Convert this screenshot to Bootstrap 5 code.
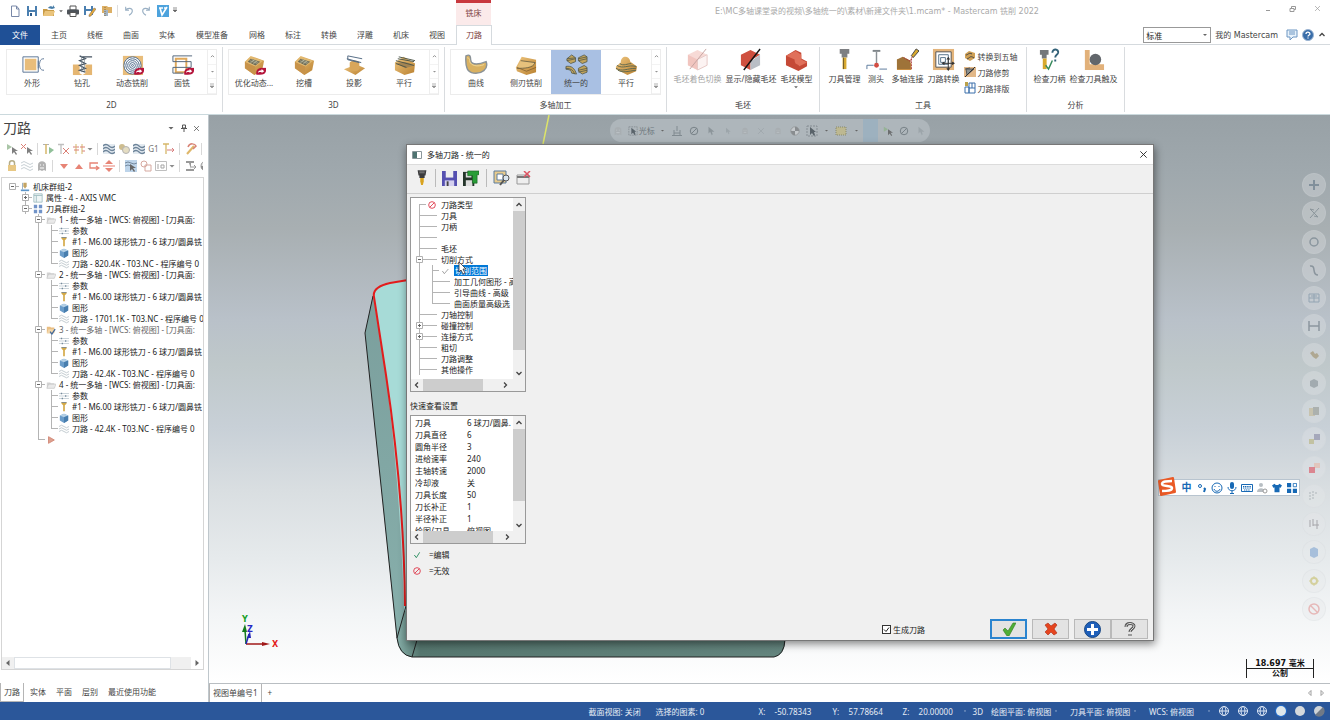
<!DOCTYPE html>
<html lang="zh-CN">
<head>
<meta charset="utf-8">
<meta name="viewport" content="width=device-width, initial-scale=1">
<title>Mastercam 铣削 2022</title>
<link href="https://cdn.jsdelivr.net/npm/bootstrap@5.3.0/dist/css/bootstrap.min.css" rel="stylesheet">
<style>
:root{--line:#d9dcdf;--blue:#2b579a;--ink:#444}
body{font:8px/11px "Noto Sans","Noto Sans CJK SC",sans-serif;color:var(--ink);background:#fff}
svg{display:block;flex:none}
.flat{border:0;background:none;padding:0;color:inherit;font:inherit;display:flex;align-items:center;justify-content:center}
.i8{width:8px;height:8px}.i10{width:10px;height:10px}.i12{width:12px;height:12px}.i24{width:23px;height:23px}
.wide-latin{font-family:"DejaVu Sans","Noto Sans CJK SC",sans-serif}
/* title bar and tabs */
.titlebar{height:25px}
.quick{width:456px;padding:0 0 4px 6px}
.quick .flat{width:17px}
.quick .drop{width:7px}
.quick .rule{width:1px;height:12px;background:#ddd;margin:0 2px}
.context-tab{width:35px;background:#fbeaea;border-top:3px solid #c8383e;color:#7c4040}
.doc-title{color:#a9a9a9;padding:6px 0 0 8px}
.win .flat{width:25px;height:17px;color:#999}
.tabs{height:20px;box-shadow:inset 0 -1px #d5dade}
.tabs a{color:var(--ink);text-decoration:none;width:36px;text-align:center;line-height:20px}
.tabs .file-tab{background:#1f5096;color:#fff;width:40px;margin-right:1px}
.tabs .wide-tab{width:54px}
.tabs .on{background:#fff;border:1px solid #d5dade;border-bottom:0;color:#7c3b3b;line-height:18px;margin-left:1px}
.mode{width:68px;height:16px;border:1px solid #999;border-radius:0;font-size:8px;padding:0 2px;appearance:none;color:#222;background:#fff url("data:image/svg+xml,%3Csvg xmlns='http://www.w3.org/2000/svg' viewBox='0 0 6 4'%3E%3Cpath d='M1 1h4L3 3z' fill='%23666'/%3E%3C/svg%3E") right 2px center/6px 4px no-repeat}
/* ribbon */
.ribbon{height:70px;border-bottom:1px solid #cbd9dd;padding-left:1px}
.rgroup{border-right:1px solid var(--line);margin:2px 0;display:flex;flex-direction:column;justify-content:space-between;align-items:center;padding:1px 0 2px}
.w-gallery{width:222px}.w-stock{width:153px}.w-tools{width:207px}.w-check{width:98px}
.gallery{width:211px;height:46px;border:1px solid #ececec;margin-top:1px;display:flex}
.gallery>.flat{width:50px;flex-direction:column;justify-content:flex-start;padding-top:3px;gap:1px}
.gallery>.picked{background:#a9c0e3}
.spin{width:9px;border-left:1px solid #eee;display:flex;flex-direction:column}
.spin .flat{flex:1;border-bottom:1px solid #eee;opacity:.7}
.big{flex-direction:column;justify-content:flex-start;white-space:nowrap}
.big .i24{margin-bottom:2px}
.stack .flat{height:16px;gap:2px;white-space:nowrap;justify-content:flex-start}
/* side panel */
.side{width:209px;border-right:1px solid #bfc7cc}
.side h1{font-size:14px;line-height:20px;margin:0;font-weight:400}
.side-head{padding:3px 5px 2px 3px}
.side-head .flat{width:13px}
.mini{height:17px;width:203px;overflow:hidden;opacity:.75}
.mini .flat{width:15px;height:15px;flex:none}
.mini .drop{width:8px}
.mini .bar{width:1px;height:12px;background:#ccc;margin:0 3px;flex:none}
.treebox{border:1px solid #d5d5d5;width:203px;margin:3px 0 13px 1px;color:#222}
.optree{padding:3px 0 0 4px}
.trow{display:flex;height:11px;align-items:center;white-space:nowrap}
.cell{width:13px;height:11px;flex:none;position:relative}
.v{background:linear-gradient(#b4b4b4,#b4b4b4) 6px 0/1px 100% no-repeat}
.tee{background:linear-gradient(#b4b4b4,#b4b4b4) 6px 0/1px 100% no-repeat,linear-gradient(#b4b4b4,#b4b4b4) 6px 5px/7px 1px no-repeat}
.end{background:linear-gradient(#b4b4b4,#b4b4b4) 6px 0/1px 6px no-repeat,linear-gradient(#b4b4b4,#b4b4b4) 6px 5px/7px 1px no-repeat}
.top{background:linear-gradient(#b4b4b4,#b4b4b4) 6px 5px/1px 6px no-repeat,linear-gradient(#b4b4b4,#b4b4b4) 6px 5px/7px 1px no-repeat}
.lone{background:linear-gradient(#b4b4b4,#b4b4b4) 6px 5px/7px 1px no-repeat}
.cell svg{width:7px;height:7px;margin:2px 3px}
.ticon{width:12px;height:11px;flex:none;display:flex;align-items:center;justify-content:center}
.dash{background:linear-gradient(#b4b4b4,#b4b4b4) 0 5px/11px 1px no-repeat}
.ttext{padding-left:2px}
.current{color:#666}
.chosen{background:#0078d7;color:#fff;padding:0 1px}
.hbar{height:12px;background:#f0f0f0}
.hbar .flat{width:12px}
.dock a{color:var(--ink);text-decoration:none;line-height:18px;padding:0 5px}
.dock .on{border:1px solid #b5b5b5;border-top:0;padding:0 3px;margin-right:1px}
/* graphics view */
.view{min-width:0;overflow:hidden;background:linear-gradient(#98a1a6,#9fa8ad 10%,#a8afb2 20%,#b9c1c9 36%,#bfc8ca 44%,#c8d0d7 55%,#d9dee1 66%,#e6eaec 78%,#f3f5f6 88%,#fff)}
.pill{width:320px;height:23px;top:4px;left:50%;margin-left:-160px;border-radius:12px;background:#aeb6bb;color:#6d777d}
.pill .flat{width:17px}
.pill .menu{width:13px}
.pill .labelled{width:30px;flex:none;white-space:nowrap;gap:1px}
.rail{top:58px;bottom:62px;right:4px}
.rail .flat{width:24px;height:24px;border-radius:50%;border:1px solid #d5dadd88;background:#e6e9eb88;opacity:.6}
.scale{right:16px;bottom:5px;width:68px;color:#111;font:bold 8px/9px "DejaVu Sans","Noto Sans CJK SC",sans-serif;border:solid #222;border-width:0 1px;text-align:center}
.scale span{display:block}
.scale span+span{border-top:1px solid #222}
.ime{right:30px;top:364px;height:17px;background:#fff;border:1px solid #b8c4cf;padding-left:20px;color:#1769b5}
.ime .flat{width:15px}
.ime .logo{left:-2px;top:-4px}
.ime .lang{font-size:10px;font-weight:700}
/* dialog */
.dlg{left:197px;right:176px;top:29px;bottom:42px;background:#f0f0f0;border:1px solid #777;box-shadow:1px 3px 8px #0007;color:#222}
.dlg-title{height:20px;background:#fff;border-bottom:1px solid #dcdcdc;padding:0 5px 0 4px}
.dlg-tools{height:29px;border-bottom:1px solid #cfcfcf;padding:0 4px 2px}
.dlg-tools .flat{width:22px;height:22px}
.dlg-tools .bar{width:1px;height:18px;background:#bbb;margin:0 2px}
.dlg-tools .wide{margin:0 4px}
.dlg-side{width:120px;padding:3px 0 0 3px}
.lbox{border:1px solid #999;background:#fff;width:116px}
.lbox .ttext{padding-left:3px}
.clip{overflow:hidden;flex:1;min-width:0}
.params{height:180px;padding:1px 0 0 2px}
.facts{height:115px;padding-top:1px}
.facts table{width:101px}
.facts td{padding:0;height:12px;line-height:12px;white-space:nowrap}
.facts td:first-child{width:56px;padding-left:4px}
.vbar{width:12px;background:#f0f0f0}
.vbar .flat{height:13px;width:12px}
.thumb{background:#cdcdcd}
.vt1{height:139px}.vt2{height:72px}.ht1{width:60px}.ht2{width:70px}
.legend-row{display:flex;align-items:center;padding-left:3px;margin-top:5px}
.tick{appearance:none;width:9px;height:9px;border:1px solid #333;margin:0 2px 0 0;background:#fff url("data:image/svg+xml,%3Csvg xmlns='http://www.w3.org/2000/svg' viewBox='0 0 7 7'%3E%3Cpath d='M1 3.5l2 2 3-4' fill='none' stroke='%23222'/%3E%3C/svg%3E") center/7px no-repeat}
.act{width:37px;height:20px;border:1px solid #b9b9b9;background:#e3e3e3;margin-left:5px}
.act.main{border:2px solid #2a84cf}
.dlg-foot{padding:0 5px 1px 0}
.pointer{left:51px;top:116px}
/* bottom */
.dock{height:19px;border-top:1px solid #b9bec2}
.side-dock{border-top:0}
.status{height:18px;background:var(--blue);color:#e6ecf5;white-space:nowrap}
.status .sec{width:67px}.status .sel{width:103px}
.status .val{width:54px;display:flex;align-items:center;justify-content:space-between;padding-right:6px}
.status .axis{width:16px}
.status .plane{width:79px;display:flex;align-items:center;justify-content:space-between;padding-right:12px}
.status .last{width:62px;padding-right:0}
.status .icons{width:112px;margin-left:7px;padding:0 5px 0 0}
</style>
</head>
<body class="vh-100 overflow-hidden d-flex flex-column">

<svg width="0" height="0" class="position-absolute" aria-hidden="true">
<defs>
<linearGradient id="tan" x2="1" y2="1"><stop stop-color="#efc67f"/><stop offset="1" stop-color="#b9802f"/></linearGradient>
<symbol id="new" viewBox="0 0 12 12"><path d="M2.500 1h5l2.500 3v7.500h-7.500zM7.500 1v3h2.500" fill="#fff" stroke="#7988a8"/></symbol>
<symbol id="save" viewBox="0 0 12 12"><path d="M1 1h10v10H1z" fill="#4a7fb0"/><path d="M3 1h6v4H3zM3 7h6v4H3z" fill="#fff"/><path d="M4 8h2v3H4z" fill="#2d5b8a"/></symbol>
<symbol id="open" viewBox="0 0 12 12"><path d="M0 4h4l1 1h6v6H0z" fill="#c99b46"/><path d="M2 6h10l-2 5H0z" fill="#eac47c"/><path d="M5 3c1-2 4-2 5-1V0l2 3-3 1" fill="#477da8"/></symbol>
<symbol id="print" viewBox="0 0 12 12"><path d="M3 1h6v4H3z" fill="#fff" stroke="#555"/><rect y="4.500" width="12" height="5" rx="1" fill="#4d5359"/><path d="M3 7.500h6v4H3z" fill="#fff" stroke="#555"/></symbol>
<symbol id="pencil" viewBox="0 0 12 12"><path d="M0 1h9v9H0z" fill="#4a7fb0"/><path d="M2 1h5v3H2zM2 6h5v4H2z" fill="#fff"/><path d="M5 10l5-7 2 1-5 7-2 .5z" fill="#e6a939" stroke="#765" stroke-width=".5"/></symbol>
<symbol id="zip" viewBox="0 0 12 12"><path d="M1 1h5l1 1h4v6H1z" fill="#ddb066"/><path d="M3 5h4v6H3z" fill="#a3b3c4"/><path d="M4 2v9" stroke="#8b6c32" stroke-dasharray="1"/></symbol>
<symbol id="undo" viewBox="0 0 12 12"><path d="M2 1v4h4M2 5c2-3 8-3 8 1 0 2-2 4-4 5" fill="none" stroke="#9ab0c4" stroke-width="1.300"/></symbol>
<symbol id="redo" viewBox="0 0 12 12"><path d="M10 1v4H6M10 5C8 2 2 2 2 6c0 2 2 4 4 5" fill="none" stroke="#9ab0c4" stroke-width="1.300"/></symbol>
<symbol id="verify" viewBox="0 0 12 12"><path d="M0 0h12v12H0z" fill="#4da3dd"/><path d="M2 3h4M3 3l2 7 5-8M7 3h3" fill="none" stroke="#fff" stroke-width="1.600"/></symbol>
<symbol id="redarrow" viewBox="0 0 12 8"><path d="M1 8C0 3 3 0 8 0h4v4c-1 3-3 4-7 4z" fill="#b5153c"/><path d="M3 6c0-2 1-3 4-3V1.500l3 2.500-3 2V5c-2 0-3 0-4 1z" fill="#fff"/></symbol>
<symbol id="contour" viewBox="0 0 24 24"><path d="M2 4h16v16H2z" fill="#fff" stroke="#5b7594"/><path d="M4 6h12v12H4z" fill="#e8bd7b"/><path d="M24 6c-5 0-4 4-5 6 1 2 0 6 5 6M18 8v8" fill="none" stroke="#5b7594"/></symbol>
<symbol id="drill" viewBox="0 0 24 24"><path d="M2 12h20v11H2z" fill="#e5b672"/><path d="M9 12h6v9l-3 2-3-2z" fill="#fff"/><path d="M12 4h10M9 3l6 3-6 2 6 3-6 2 6 3-6 2 6 2" fill="none" stroke="#455361" stroke-width="1.300"/><path d="M11 3v17M14 4v15" stroke="#77838e" stroke-width=".7"/></symbol>
<symbol id="dynamic" viewBox="0 0 24 24"><path d="M2 3h21v20H2z" fill="#e8bd7b"/><g fill="none" stroke="#4a6788"><circle cx="12" cy="13" r="9" fill="#fff"/><circle cx="12" cy="13" r="7"/><circle cx="12" cy="13" r="5"/><circle cx="12" cy="13" r="3"/><circle cx="12" cy="13" r="1"/></g><use href="#redarrow" x="13" y="15" width="11" height="8"/></symbol>
<symbol id="face" viewBox="0 0 24 24"><path d="M5 6h11v14H5z" fill="#fff" stroke="#e0a95b" stroke-width="2"/><path d="M22 3H2v6h19v6H2v6h11" fill="none" stroke="#51657a"/><use href="#redarrow" x="13" y="15" width="11" height="8"/></symbol>
<symbol id="pocket" viewBox="0 0 24 24"><path d="M8 3l14 5-2 10-8 5L2 16l0-7z" fill="url(#tan)"/><path d="M2 9l11 5-1 9L2 16z" fill="#c8934a"/><path d="M8 4l13 4-8 6-11-5z" fill="#e2b970"/><path d="M8 6l10 3-5 4-8-4z" fill="#6e6c57"/><path d="M7 8l8 3M9 7l7 3M12 7l-5 4M15 8l-5 4" stroke="#c4c5ad" stroke-width=".6"/></symbol>
<symbol id="opti" viewBox="0 0 24 24"><use href="#pocket" width="24" height="24"/><use href="#redarrow" x="13" y="15" width="11" height="8"/></symbol>
<symbol id="project" viewBox="0 0 24 24"><path d="M1 17l13-5 9 4-10 7z" fill="url(#tan)"/><path d="M7 10c2-3 9-3 10 0v7c-3 3-7 2-10 0z" fill="#d8a65a"/><path d="M5 3l15 3M4 6l15 4M5 3v4l12 3" fill="none" stroke="#526a83"/></symbol>
<symbol id="parallel3" viewBox="0 0 24 24"><path d="M2 10l9-6 12 7-1 9-10 3-10-5z" fill="url(#tan)"/><path d="M2 10c5 2 7-4 20 3L13 16z" fill="#a38452"/><path d="M3 8l19 5M5 6l17 3M6 4l17 4M3 11l11 4" stroke="#4d5648" fill="none"/></symbol>
<symbol id="curve" viewBox="0 0 24 24"><path d="M1 3c4-2 5 0 5 5 1 5 9 4 16 1 3 8-5 13-13 12-6-1-9-5-8-18z" fill="#d9b161" stroke="#8a9297" stroke-width="1.500"/><path d="M2 5c1 0 3 0 3 4 1 4 8 6 15 3" fill="none" stroke="#f0d798"/></symbol>
<symbol id="swarf" viewBox="0 0 24 24"><path d="M1 15L7 4l15 3v13l-10 3-10-4z" fill="url(#tan)"/><path d="M6 8l15 2c-2 6-12 6-19 6" fill="#e6c17c" stroke="#5b5842" stroke-width=".8"/><path d="M2 15l10 4 10-4" fill="none" stroke="#75552b" stroke-width=".7"/></symbol>
<symbol id="unified" viewBox="0 0 24 24"><g stroke="#4e5548" stroke-width=".8"><path d="M2 6l5-4 4 3v4l-5 2-4-3zM14 5l6-3 3 2v5l-5 2-4-3zM1 14c6-1 9 2 11 8l-5-1c0-3-3-4-6-4zM14 16l6-3 3 2v5l-5 2-4-3z" fill="#c2a45c"/><path d="M2 8l9-2M2 6l9-1M14 8l9-2M14 6l9-2M1 16c5 0 8 2 9 6M14 18l9-2M14 20l9-2" fill="none"/></g></symbol>
<symbol id="parallel5" viewBox="0 0 24 24"><path d="M1 14l5-4c0-8 9-8 10-1l7 5-1 5-9 4-12-6z" fill="url(#tan)"/><path d="M2 13c7 4 11-1 20 1M1 16c7 4 11 0 21 0M3 18c6 3 10 1 19 0M5 11c4 3 8 0 12 0" fill="none" stroke="#5f694e"/></symbol>
<symbol id="stockoff" viewBox="0 0 24 24"><path d="M2 7l10-5 10 5v11l-10 5-10-5z" fill="#f1b6ae"/><path d="M2 7l10 5v11l-10-5z" fill="#e58c80"/><path d="M12 12l10-5v11l-10 5z" fill="#fae8e6" stroke="#cf9691"/><path d="M4 22L21 1" stroke="#8a4a46"/></symbol>
<symbol id="stockview" viewBox="0 0 24 24"><path d="M2 7l10-5 10 5-10 6v10l-10-5z" fill="#cf503f"/><path d="M22 7v11l-10 5v-9z" fill="#b9bec5"/><path d="M22 1L5 23" stroke="#111" stroke-width="1.500"/></symbol>
<symbol id="stockmodel" viewBox="0 0 24 24"><path d="M1 8l10-6 6 3v6l6 3v5l-9 5-13-6z" fill="#c54936"/><path d="M1 8l9 4 7-5-6-4zM10 12c0 6 3 4 5 7l8-4-6-3V7z" fill="#e0705a"/></symbol>
<symbol id="tool" viewBox="0 0 24 24"><path d="M7 1h10v5H7zM9 6h6v4H9z" fill="#7d7f82"/><path d="M10 10h4v12h-4z" fill="#d9a92e"/><path d="M11 10v12" stroke="#705b2b"/></symbol>
<symbol id="probe" viewBox="0 0 24 24"><path d="M8 2h8v2H8z" fill="#7f8589"/><path d="M12 4v13" stroke="#8b9196" stroke-width="1.500"/><circle cx="12" cy="18" r="2.500" fill="#d24d43"/><path d="M2 22v-4h7m6 4h8" stroke="#5b799c" fill="none"/></symbol>
<symbol id="link" viewBox="0 0 24 24"><path d="M1 12h7l8 4v7H1z" fill="#c98f43"/><path d="M1 12l6-3 8 4v9H1z" fill="#9e7339"/><path d="M16 8l5-7 3 2-6 7z" fill="#d9a92e" stroke="#444"/><path d="M8 10l7 4 2-5M16 11v11" fill="none" stroke="#a33" stroke-dasharray="2 1"/></symbol>
<symbol id="xform" viewBox="0 0 24 24"><path d="M1 1h22v22H1z" fill="#e3b47b"/><path d="M4 4h16v16H4z" fill="#fff" stroke="#555"/><path d="M7 7h10v10H7zM9 10h5v5H9z" fill="none" stroke="#56738b"/><path d="M17 11v11M12 16h11" stroke="#333"/><path d="M17 9l-2 3h4zM17 24l-2-3h4zM10 16l3-2v4zM24 16l-3-2v4z" fill="#333"/></symbol>
<symbol id="five" viewBox="0 0 12 12"><path d="M1 4l4-3 6 2v5l-5 3-5-3z" fill="#cfa055"/><path d="M2 5c2 0 3-3 6-1M3 9c3-1 3-4 7-1" stroke="#474747" fill="none"/></symbol>
<symbol id="trim" viewBox="0 0 12 12"><path d="M0 1h12v10H0z" fill="#e2b888"/><path d="M2 3h8L3 9zM1 3l5-1" fill="#8b9191" stroke="#555"/><path d="M1 11L11 1" stroke="#333"/></symbol>
<symbol id="nest" viewBox="0 0 12 12"><path d="M5 1h6v10H5zM5 6h6M1 5h4v6H1zM8 1v5" fill="#fff" stroke="#3b6eaa"/><path d="M1 0h3v4H1z" fill="#bba14a"/></symbol>
<symbol id="holder" viewBox="0 0 24 24"><path d="M2 2h9v5H2zM4 7h5v4H4z" fill="#74777a"/><path d="M5 11h4v11H5z" fill="#d9a92e"/><path d="M8 18l3 4 4-9" fill="none" stroke="#338859" stroke-width="1.500"/><path d="M15 5c0-5 7-4 6 0-1 3-3 2-3 5m0 2v2" fill="none" stroke="#326178" stroke-width="2"/></symbol>
<symbol id="touch" viewBox="0 0 24 24"><path d="M3 2h5v15h15v6H3z" fill="#e2b17a"/><circle cx="14" cy="12" r="6" fill="#62666b"/></symbol>
<symbol id="chat" viewBox="0 0 12 12"><path d="M1 1h10v7H7l-3 3V8H1z" fill="#e8f2fb" stroke="#6d96c2"/><path d="M3 3h6M3 5h6" stroke="#6d96c2"/></symbol>
<symbol id="help" viewBox="0 0 12 12"><circle cx="6" cy="6" r="5.500" fill="#396da9" stroke="#9bb4d1"/><path d="M4 5c0-3 4-2 4 0 0 1-2 1-2 2.500m0 1v1" fill="none" stroke="#fff" stroke-width="1.300"/></symbol>
<symbol id="cur" viewBox="0 0 12 12"><path d="M1 1l5 3-5 3z" fill="#8eb38a"/><path d="M6 4v7l2-2 2 3 1-1-2-3h3z" fill="#555"/></symbol>
<symbol id="xcur" viewBox="0 0 12 12"><path d="M0 1l5 5M5 1L0 6" stroke="#d05648"/><path d="M6 4v7l2-2 2 3 1-1-2-3h3z" fill="#555"/></symbol>
<symbol id="tplay" viewBox="0 0 12 12"><path d="M0 1.500h6" stroke="#999"/><path d="M3 1v10" stroke="#c9a038" stroke-width="1.500"/><path d="M6 4l5 3-5 4z" fill="#6cab77"/></symbol>
<symbol id="tx" viewBox="0 0 12 12"><path d="M0 1.500h6M3 1v10" stroke="#aaa" stroke-width="1.300"/><path d="M5 5l6 6M11 5l-6 6" stroke="#d05648"/></symbol>
<symbol id="tt" viewBox="0 0 12 12"><path d="M0 4h6M9 8h3" stroke="#c55"/><path d="M3 1v10M9 1v10" stroke="#c9a038"/><path d="M1 7h5M7 4h5" stroke="#d05648"/></symbol>
<symbol id="waves" viewBox="0 0 12 12"><path d="M0 1h12v10H0z" fill="#dbe5ed"/><path d="M0 3q3-3 6 0t6 0M0 6q3-3 6 0t6 0M0 9q3-3 6 0t6 0" fill="none" stroke="#3d5b78" stroke-width="1.300"/></symbol>
<symbol id="wave2" viewBox="0 0 12 12"><path d="M0 3q3-3 6 0t6 0M0 6q3-3 6 0t6 0M0 9q3-3 6 0t6 0" fill="none" stroke="#b7c2c8"/></symbol>
<symbol id="balls" viewBox="0 0 12 12"><circle cx="4" cy="4" r="3" fill="#bea76a"/><circle cx="8" cy="7" r="3.500" fill="#ddd2ae" stroke="#999"/></symbol>
<symbol id="tarrow" viewBox="0 0 12 12"><path d="M0 1h6M3 1v10" stroke="#c9a038" stroke-width="1.300"/><path d="M4 7h7M9 5l2 2-2 2" stroke="#c55" fill="none"/></symbol>
<symbol id="brush" viewBox="0 0 12 12"><path d="M2 11L9 3" stroke="#d5a03a" stroke-width="2"/><path d="M3 4c2-5 7-3 8-1L8 6" fill="none" stroke="#cc5b49" stroke-width="1.500"/></symbol>
<symbol id="ring" viewBox="0 0 12 12"><circle cx="6" cy="6" r="4.500" fill="none" stroke="currentColor"/><path d="M3 9l6-6" stroke="currentColor"/></symbol>
<symbol id="lock" viewBox="0 0 12 12"><path d="M3.500 6V3c0-3 5-3 5 0v3" fill="none" stroke="#9c9160" stroke-width="1.500"/><path d="M2 5h8v6H2z" fill="#e1b65b"/></symbol>
<symbol id="ghost" viewBox="0 0 12 12"><path d="M2 11V5c0-5 8-5 8 0v6l-2-1-2 1-2-1z" fill="#999"/><path d="M4 5h1m2 0h1M4 8h4" stroke="#fff"/></symbol>
<symbol id="down" viewBox="0 0 12 12"><path d="M2 4h8L6 9z" fill="#df5b48"/></symbol>
<symbol id="up" viewBox="0 0 12 12"><path d="M2 9h8L6 4z" fill="#df5b48"/></symbol>
<symbol id="loop" viewBox="0 0 12 12"><path d="M10 3H2v5h8M8 6l3 2-3 2" fill="none" stroke="#df5b48" stroke-width="1.300"/></symbol>
<symbol id="updown" viewBox="0 0 12 12"><path d="M2 4h8L6 0zM2 8h8l-4 4zM0 5.500h12v1H0z" fill="#df5b48"/></symbol>
<symbol id="wsel" viewBox="0 0 12 12"><path d="M0 0h12v12H0z" fill="#a8c6e4"/><path d="M0 3q3-2 6 0t6 0M0 6q3-2 6 0" fill="none" stroke="#47637e"/><path d="M5 4v7l2-2 2 3 1-1-2-3h3z" fill="#333"/></symbol>
<symbol id="rings" viewBox="0 0 12 12"><circle cx="4" cy="4" r="3" fill="none" stroke="#c98c80"/><path d="M5 5h6v6H5z" fill="none" stroke="#c98c80"/></symbol>
<symbol id="ibox" viewBox="0 0 12 12"><path d="M.5 1.500h11v9H.5z" fill="#fff" stroke="#aaa"/><path d="M3 4v5m3-4h3v3H6z" fill="none" stroke="#888"/></symbol>
<symbol id="beam" viewBox="0 0 12 12"><path d="M1 1h8v2H1zM4 3h2v6M1 9h8v2H1z" fill="#777"/><path d="M6 7h5M9 5l2 2-2 2" stroke="#777" fill="none"/></symbol>
<symbol id="pie" viewBox="0 0 12 12"><circle cx="6" cy="6" r="5" fill="#ddd" stroke="#777"/><path d="M6 6V1a5 5 0 0 1 5 5zM6 6v5a5 5 0 0 1-5-5z" fill="#666"/></symbol>
<symbol id="minus" viewBox="0 0 7 7"><path d="M.5.5h6v6h-6z" fill="#fff" stroke="#b0b0b0"/><path d="M2 3.500h3" stroke="#666"/></symbol>
<symbol id="plus" viewBox="0 0 7 7"><path d="M.5.5h6v6h-6z" fill="#fff" stroke="#b0b0b0"/><path d="M2 3.500h3M3.500 2v3" stroke="#666"/></symbol>
<symbol id="machine" viewBox="0 0 12 12"><path d="M4 1h4v4l-2 3-2-3z" fill="#c4a462"/><path d="M1 9h10v2H1z" fill="#5c95c9"/><path d="M3 1v8" stroke="#8ba4ba"/></symbol>
<symbol id="prop" viewBox="0 0 12 12"><path d="M1 1h10v10H1z" fill="#eef5f5" stroke="#9dbcbf"/><path d="M1 3h10M4 3v8" stroke="#9dbcbf"/></symbol>
<symbol id="tgroup" viewBox="0 0 12 12"><path d="M1 1h4v4H1zM7 1h4v4H7zM1 7h4v4H1zM7 7h4v4H7z" fill="#7193c8"/></symbol>
<symbol id="folder" viewBox="0 0 12 12"><path d="M1 3h4l1 1h4v6H1z" fill="#d4d4d4"/><path d="M3 5h9l-2 5H1z" fill="#e9e9e9" stroke="#bbb" stroke-width=".6"/></symbol>
<symbol id="folderon" viewBox="0 0 12 12"><path d="M1 2h4l1 1h4v7H1z" fill="#e9be82"/><path d="M3 5h8l-2 5H1z" fill="#f2d6a9"/><path d="M5 8l2 3 4-6" fill="none" stroke="#41689b" stroke-width="1.500"/></symbol>
<symbol id="para" viewBox="0 0 12 12"><path d="M0 3h12M0 6h12M0 9h12" stroke="#c0cbd3"/><path d="M3 2v2m5 1v2m-4 1v2" stroke="#74899b" stroke-width="1.500"/></symbol>
<symbol id="mill" viewBox="0 0 12 12"><path d="M3 0h6v2L7 4v7H5V4L3 2z" fill="#d4a947"/><path d="M3 0h6v1H3z" fill="#76889a"/></symbol>
<symbol id="geom" viewBox="0 0 12 12"><path d="M1 3l5-2 5 2v6l-5 3-5-3z" fill="#6a9cc9"/><path d="M1 3l5 2 5-2-5-2z" fill="#b4d0e6"/><path d="M6 5v7l5-3V3z" fill="#487eae"/></symbol>
<symbol id="insert" viewBox="0 0 12 12"><path d="M3 2l7 4-7 4z" fill="#dda08e" stroke="#d08371"/></symbol>
<symbol id="ban" viewBox="0 0 12 12"><circle cx="6" cy="6" r="5" fill="none" stroke="#dd3346" stroke-width="1.300"/><path d="M3 9l6-6" stroke="#dd3346" stroke-width="1.300"/></symbol>
<symbol id="ok" viewBox="0 0 12 12"><path d="M2 6l3 4 5-8" fill="none" stroke="currentColor" stroke-width="1.300"/></symbol>
<symbol id="okgrey" viewBox="0 0 12 12"><path d="M2 6l3 4 6-7" fill="none" stroke="#777"/></symbol>
<symbol id="al" viewBox="0 0 8 8"><path d="M5.500 1L2 4l3.500 3z" fill="#666"/></symbol>
<symbol id="ar" viewBox="0 0 8 8"><path d="M2.500 1L6 4 2.500 7z" fill="#666"/></symbol>
<symbol id="al2" viewBox="0 0 8 8"><path d="M5 1.500L2.500 4 5 6.500z" fill="#fff" stroke="#888" stroke-width=".8"/></symbol>
<symbol id="ar2" viewBox="0 0 8 8"><path d="M3 1.500L5.500 4 3 6.500z" fill="#fff" stroke="#888" stroke-width=".8"/></symbol>
<symbol id="cl" viewBox="0 0 8 8"><path d="M5 1.500L2.500 4 5 6.500" fill="none" stroke="#444" stroke-width="1.300"/></symbol>
<symbol id="cr" viewBox="0 0 8 8"><path d="M3 1.500L5.500 4 3 6.500" fill="none" stroke="#444" stroke-width="1.300"/></symbol>
<symbol id="cu" viewBox="0 0 8 8"><path d="M1.500 5L4 2.500 6.500 5" fill="none" stroke="#444" stroke-width="1.300"/></symbol>
<symbol id="cd" viewBox="0 0 8 8"><path d="M1.500 3L4 5.500 6.500 3" fill="none" stroke="#444" stroke-width="1.300"/></symbol>
<symbol id="ca" viewBox="0 0 8 8"><path d="M1.500 3h5L4 5.500z" fill="#666"/></symbol>
<symbol id="mark" viewBox="0 0 4 4"><path d="M1 1.500h2L2 3z" fill="#a9bbd8"/></symbol>
<symbol id="cx" viewBox="0 0 10 10"><path d="M1.500 1.500l7 7M8.500 1.500l-7 7" stroke="currentColor" fill="none"/></symbol>
<symbol id="arrow" viewBox="0 0 12 12"><path d="M3 1v8l2-2 2 4 1-1-1-3h3z" fill="#6b757b"/></symbol>
<symbol id="box" viewBox="0 0 12 12"><path d="M1 1h10v10H1z" fill="none" stroke="#858d93" stroke-dasharray="2 1"/><path d="M4 2v8l2-2 2 3 1-1-1-3h2z" fill="#59636a"/></symbol>
<symbol id="dots" viewBox="0 0 12 12"><path d="M1 2h10v8H1z" fill="#bdb891" stroke="#87896d" stroke-dasharray="1"/></symbol>
<symbol id="globe" viewBox="0 0 12 12"><circle cx="6" cy="6" r="4.500" fill="none" stroke="#dce6f5"/><ellipse cx="6" cy="6" rx="2" ry="4.500" fill="none" stroke="#dce6f5"/><path d="M1 6h10" stroke="#dce6f5"/></symbol>
<symbol id="more" viewBox="0 0 6 7"><path d="M1 1h4M1 3h4L3 5z" stroke="#666" fill="#666" stroke-width=".7"/></symbol>
</defs>
</svg>

<header>
  <div class="titlebar d-flex">
    <div class="quick d-flex align-items-center">
      <button class="flat" aria-label="新建"><svg class="i12"><use href="#new"/></svg></button>
      <button class="flat" aria-label="保存"><svg class="i12"><use href="#save"/></svg></button>
      <button class="flat" aria-label="打开"><svg class="i12"><use href="#open"/></svg></button>
      <button class="flat drop" aria-label="最近"><svg width="6" height="6"><use href="#ca"/></svg></button>
      <button class="flat" aria-label="打印"><svg class="i12"><use href="#print"/></svg></button>
      <button class="flat" aria-label="另存为"><svg class="i12"><use href="#pencil"/></svg></button>
      <button class="flat" aria-label="打包"><svg class="i12"><use href="#zip"/></svg></button>
      <span class="rule"></span>
      <button class="flat" aria-label="撤销"><svg class="i10"><use href="#undo"/></svg></button>
      <button class="flat" aria-label="重做"><svg class="i10"><use href="#redo"/></svg></button>
      <button class="flat" aria-label="验证"><svg class="i12"><use href="#verify"/></svg></button>
      <button class="flat drop" aria-label="自定义"><svg width="6" height="7"><use href="#more"/></svg></button>
    </div>
    <div class="context-tab text-center pt-1">铣床</div>
    <div class="doc-title wide-latin flex-grow-1 text-center text-nowrap">E:\MC多轴课堂录的视频\多轴统一的\素材\新建文件夹\1.mcam* - Mastercam 铣削 2022</div>
    <div class="win d-flex">
      <button class="flat" aria-label="最小化"><svg width="8" height="8"><path d="M2 5.500h4" stroke="#999"/></svg></button>
      <button class="flat" aria-label="还原"><svg width="8" height="8"><path d="M1 3.500h4v3H1zM2.500 3V1.500h4v3H5" fill="none" stroke="#999"/></svg></button>
      <button class="flat" aria-label="关闭"><svg width="7" height="7"><use href="#cx"/></svg></button>
    </div>
  </div>
  <nav class="tabs d-flex">
    <a href="#" class="file-tab">文件</a><a href="#">主页</a><a href="#">线框</a><a href="#">曲面</a><a href="#">实体</a><a href="#" class="wide-tab">模型准备</a><a href="#">网格</a><a href="#">标注</a><a href="#">转换</a><a href="#">浮雕</a><a href="#">机床</a><a href="#">视图</a><a href="#" class="on">刀路</a>
    <div class="ms-auto d-flex align-items-center">
      <select class="mode" aria-label="模式"><option>标准</option></select>
      <span class="ms-1 me-1 wide-latin">我的 Mastercam</span>
      <button class="flat ms-1" aria-label="消息"><svg class="i12"><use href="#chat"/></svg></button>
      <button class="flat ms-1" aria-label="帮助"><svg class="i12"><use href="#help"/></svg></button>
      <button class="flat ms-1 me-1" aria-label="折叠功能区"><svg width="8" height="8"><use href="#cu"/></svg></button>
    </div>
  </nav>
  <div class="ribbon d-flex">
    <section class="rgroup w-gallery"><div class="gallery">
      <button class="flat"><svg class="i24"><use href="#contour"/></svg>外形</button>
      <button class="flat"><svg class="i24"><use href="#drill"/></svg>钻孔</button>
      <button class="flat"><svg class="i24"><use href="#dynamic"/></svg>动态铣削</button>
      <button class="flat"><svg class="i24"><use href="#face"/></svg>面铣</button>
      <div class="spin"><button class="flat" aria-label="上"><svg width="5" height="5"><use href="#cu"/></svg></button><button class="flat" aria-label="下"><svg width="5" height="5"><use href="#ca"/></svg></button><button class="flat" aria-label="更多"><svg width="6" height="7"><use href="#more"/></svg></button></div>
    </div>2D</section>
    <section class="rgroup w-gallery"><div class="gallery">
      <button class="flat"><svg class="i24"><use href="#opti"/></svg>优化动态...</button>
      <button class="flat"><svg class="i24"><use href="#pocket"/></svg>挖槽</button>
      <button class="flat"><svg class="i24"><use href="#project"/></svg>投影</button>
      <button class="flat"><svg class="i24"><use href="#parallel3"/></svg>平行</button>
      <div class="spin"><button class="flat" aria-label="上"><svg width="5" height="5"><use href="#cu"/></svg></button><button class="flat" aria-label="下"><svg width="5" height="5"><use href="#ca"/></svg></button><button class="flat" aria-label="更多"><svg width="6" height="7"><use href="#more"/></svg></button></div>
    </div>3D</section>
    <section class="rgroup w-gallery"><div class="gallery">
      <button class="flat"><svg class="i24"><use href="#curve"/></svg>曲线</button>
      <button class="flat"><svg class="i24"><use href="#swarf"/></svg>侧刃铣削</button>
      <button class="flat picked"><svg class="i24"><use href="#unified"/></svg>统一的</button>
      <button class="flat"><svg class="i24"><use href="#parallel5"/></svg>平行</button>
      <div class="spin"><button class="flat" aria-label="上"><svg width="5" height="5"><use href="#cu"/></svg></button><button class="flat" aria-label="下"><svg width="5" height="5"><use href="#ca"/></svg></button><button class="flat" aria-label="更多"><svg width="6" height="7"><use href="#more"/></svg></button></div>
    </div>多轴加工</section>
    <section class="rgroup w-stock"><div class="d-flex gap-1">
      <button class="flat big opacity-50"><svg class="i24"><use href="#stockoff"/></svg>毛坯着色切换</button>
      <button class="flat big"><svg class="i24"><use href="#stockview"/></svg>显示/隐藏毛坯</button>
      <button class="flat big"><svg class="i24"><use href="#stockmodel"/></svg>毛坯模型<svg width="6" height="6"><use href="#ca"/></svg></button>
    </div>毛坯</section>
    <section class="rgroup w-tools"><div class="d-flex gap-1">
      <button class="flat big"><svg class="i24"><use href="#tool"/></svg>刀具管理</button>
      <button class="flat big"><svg class="i24"><use href="#probe"/></svg>测头</button>
      <button class="flat big"><svg class="i24"><use href="#link"/></svg>多轴连接</button>
      <button class="flat big"><svg class="i24"><use href="#xform"/></svg>刀路转换</button>
      <div class="stack"><button class="flat"><svg class="i12"><use href="#five"/></svg>转换到五轴</button><button class="flat"><svg class="i12"><use href="#trim"/></svg>刀路修剪</button><button class="flat"><svg class="i12"><use href="#nest"/></svg>刀路排版</button></div>
    </div>工具</section>
    <section class="rgroup w-check"><div class="d-flex gap-1">
      <button class="flat big"><svg class="i24"><use href="#holder"/></svg>检查刀柄</button>
      <button class="flat big"><svg class="i24"><use href="#touch"/></svg>检查刀具触及</button>
    </div>分析</section>
  </div>
</header>

<main class="d-flex flex-grow-1 overflow-hidden">
  <aside class="side d-flex flex-column flex-shrink-0">
    <div class="side-head d-flex align-items-center">
      <h1 class="me-auto">刀路</h1>
      <button class="flat" aria-label="菜单"><svg width="8" height="8"><use href="#ca"/></svg></button>
      <button class="flat" aria-label="固定"><svg width="8" height="8"><path d="M2.500 1h3v3h-3zM1 4.500h6M4 5v3" stroke="#555" fill="none"/></svg></button>
      <button class="flat" aria-label="关闭"><svg width="7" height="7"><use href="#cx"/></svg></button>
    </div>
    <div class="mini d-flex align-items-center ps-1" data-tools="cur xcur | tplay tx tt ca | waves balls waves G1 tarrow | brush | ring"></div>
    <div class="mini d-flex align-items-center ps-1" data-tools="lock wave2 ghost | down up loop updown | wsel rings ibox ca | beam pie"></div>
    <div class="treebox d-flex flex-column flex-grow-1">
      <div class="optree flex-grow-1 overflow-hidden" id="opTree"></div>
      <div class="hbar d-flex"><button class="flat" aria-label="左"><svg width="8" height="8"><use href="#al"/></svg></button><div class="bg-white border flex-grow-1"></div><div class="px-2 me-1"></div><button class="flat bg-white" aria-label="右"><svg width="8" height="8"><use href="#ar"/></svg></button></div>
    </div>
    <nav class="dock side-dock d-flex"><a href="#" class="on">刀路</a><a href="#">实体</a><a href="#">平面</a><a href="#">层别</a><a href="#">最近使用功能</a></nav>
  </aside>

  <div class="d-flex flex-column flex-grow-1 overflow-hidden">
    <div class="view position-relative flex-grow-1">
      <svg class="position-absolute w-100 h-100" viewBox="209 115 1121 568" preserveAspectRatio="xMinYMin slice" aria-hidden="true">
        <defs><linearGradient id="sf" x2="0" y2="1"><stop stop-color="#7b9f9d"/><stop offset="1" stop-color="#88b0ac"/></linearGradient><linearGradient id="bf" x2="1"><stop stop-color="#86afa9"/><stop offset=".06" stop-color="#56776f"/><stop offset="1" stop-color="#64857e"/></linearGradient></defs>
        <path d="M549 115l-6 29" stroke="#dce36a" stroke-width="1.500"/>
        <path d="M373 295L365 333 397 640Q399 654 410 657H420V600L405 605 398 450z" fill="url(#sf)"/>
        <path d="M373 293Q376 285 390 282L420 278V640H405Q400 440 373 293z" fill="#a7dbd7"/>
        <path d="M397 638L405 610 420 630H785V644Q783 656 774 657H412Q399 655 397 638z" fill="url(#bf)"/>
        <path d="M373 296L365 333 397 638Q399 655 412 657H774Q784 655 785 640M397 638L406 606M417 640L412 657" fill="none" stroke="#222"/>
        <path d="M420 278L390 283Q372 287 374 297 L386 375Q404 495 405 606" fill="none" stroke="#e31c1c" stroke-width="2"/>
        <path d="M246 644h20" stroke="#a01818" stroke-width="1.500"/><path d="M270 644l-8-2v4z" fill="#a01818"/>
        <path d="M246 644l-1-14" stroke="#137a1b" stroke-width="1.500"/><path d="M245 624l-3 8h5z" fill="#137a1b"/>
        <path d="M246 644l3-10" stroke="#2424b5" stroke-width="1.500"/><path d="M250 631l-3 7h4z" fill="#2424b5"/>
        <g font-family="DejaVu Sans" font-weight="700" font-size="8"><text x="272" y="647" fill="#e31c1c">X</text><text x="242" y="622" fill="#18a027">Y</text><text x="247" y="632" fill="#2828c5">Z</text></g>
      </svg>
      <div class="pill position-absolute d-flex align-items-center justify-content-center">
        <button class="flat opacity-25" aria-label="锁"><svg class="i10"><use href="#ghost"/></svg></button>
        <button class="flat labelled"><svg class="i10"><use href="#box"/></svg>光标</button>
        <button class="flat menu" aria-label="光标菜单"><svg width="5" height="5"><use href="#ca"/></svg></button>
        <button class="flat" aria-label="坐标"><svg class="i12" viewBox="0 0 12 12"><path d="M1 10.500h10M6 1v5M3 5v5M9 5v5M3 8h6" stroke="#808a90" fill="none"/></svg></button>
        <button class="flat" aria-label="点"><svg class="i10"><use href="#ring"/></svg></button>
        <button class="flat opacity-50" aria-label="选择"><svg class="i10"><use href="#arrow"/></svg></button>
        <button class="flat opacity-25" aria-label="实体"><svg class="i8"><use href="#arrow"/></svg></button>
        <button class="flat opacity-25" aria-label="边"><svg class="i8"><use href="#ghost"/></svg></button>
        <button class="flat opacity-25" aria-label="面"><svg class="i8"><use href="#cx"/></svg></button>
        <button class="flat opacity-25" aria-label="体"><svg class="i8"><use href="#ghost"/></svg></button>
        <button class="flat opacity-50" aria-label="背面"><svg class="i10"><use href="#pie"/></svg></button>
        <button class="flat" aria-label="窗选"><svg class="i12"><use href="#box"/></svg></button>
        <button class="flat menu" aria-label="窗选菜单"><svg width="5" height="5"><use href="#ca"/></svg></button>
        <button class="flat" aria-label="范围"><svg class="i12"><use href="#dots"/></svg></button>
        <button class="flat menu" aria-label="范围菜单"><svg width="5" height="5"><use href="#ca"/></svg></button>
        <button class="flat" aria-label="临时"><svg width="15" height="23"><path d="M0 0h15v23H0z" fill="#9db1bf"/></svg></button>
        <button class="flat opacity-75" aria-label="反选"><svg class="i10"><use href="#cur"/></svg></button>
        <button class="flat" aria-label="上次"><svg class="i10"><use href="#ring"/></svg></button>
        <button class="flat opacity-25" aria-label="清除"><svg class="i10"><use href="#arrow"/></svg></button>
      </div>
      <div class="rail position-absolute d-flex flex-column justify-content-between" id="rail"></div>
      <div class="ime position-absolute d-flex align-items-center">
        <svg class="logo position-absolute" width="20" height="22" viewBox="0 0 20 22"><path d="M2 5l14-3 2 14-14 3z" fill="#ea5a26" stroke="#ea5a26" stroke-width="2" stroke-linejoin="round"/><path d="M15 5C10 5 5 5 5 8s10 1 10 4-5 3-10 3" fill="none" stroke="#fff" stroke-width="2.500"/></svg>
        <button class="flat lang">中</button>
        <button class="flat" aria-label="标点"><svg class="i10" viewBox="0 0 10 10"><circle cx="3" cy="3" r="1.500" fill="none" stroke="#1769b5"/><path d="M7 5l1 1-1 3" stroke="#1769b5" stroke-width="2" fill="none"/></svg></button>
        <button class="flat" aria-label="表情"><svg class="i12" viewBox="0 0 12 12"><circle cx="6" cy="6" r="5" fill="none" stroke="#1769b5"/><path d="M4 4v1m4-1v1M3 7c1 3 5 3 6 0" fill="none" stroke="#1769b5"/></svg></button>
        <button class="flat" aria-label="语音"><svg class="i12" viewBox="0 0 12 12"><rect x="4" y="0" width="4" height="7" rx="2" fill="#1769b5"/><path d="M2 5c0 5 8 5 8 0M6 9v3M4 11.500h4" fill="none" stroke="#1769b5"/></svg></button>
        <button class="flat" aria-label="键盘"><svg class="i12" viewBox="0 0 12 12"><path d="M.5 2.500h11v7H.5z" fill="#fff" stroke="#1769b5"/><path d="M2 4.500h8M2 6h8M3 8h6" stroke="#1769b5" stroke-dasharray="1.200 .6"/></svg></button>
        <button class="flat" aria-label="账号"><svg class="i12" viewBox="0 0 12 12"><circle cx="5" cy="3" r="2" fill="#b8bec3"/><path d="M1 10c0-5 8-5 8 0z" fill="#b8bec3"/><circle cx="9" cy="9" r="2" fill="#fff" stroke="#999"/></svg></button>
        <button class="flat" aria-label="皮肤"><svg class="i10" viewBox="0 0 12 12"><path d="M0 3l3-2c1 2 5 2 6 0l3 2-2 3-1-1v6H3V5L2 6z" fill="#1769b5"/></svg></button>
        <button class="flat" aria-label="工具箱"><svg class="i10" viewBox="0 0 12 12"><path d="M0 0h5v5H0zM0 7h5v5H0zM7 7h5v5H7z" fill="#1769b5"/><path d="M7.500.5h4v4h-4z" fill="none" stroke="#1769b5"/></svg></button>
      </div>
      <div class="scale position-absolute"><span>18.697 毫米</span><span>公制</span></div>

      <div class="dlg position-absolute d-flex flex-column" role="dialog" aria-label="多轴刀路 - 统一的">
        <div class="dlg-title d-flex align-items-center">
          <svg width="12" height="10" class="me-1"><path d="M1.500 1.500h9v7h-9z" fill="#fff" stroke="#8b979b"/><path d="M2 2h4v6H2z" fill="#4f7371"/></svg>
          <span class="me-auto">多轴刀路 - 统一的</span>
          <button class="flat" aria-label="关闭"><svg width="9" height="9"><use href="#cx"/></svg></button>
        </div>
        <div class="dlg-tools d-flex align-items-center">
          <button class="flat" aria-label="刀具"><svg width="14" height="18" viewBox="0 0 16 20"><path d="M3 1h10l-1 6H4zM5 7h6v3H5z" fill="#3b3b3d"/><path d="M5 2h6M5 4h6" stroke="#888"/><path d="M6 10h4v4l-1 4H7l-1-4z" fill="#d9a31f"/></svg></button>
          <span class="bar"></span>
          <button class="flat" aria-label="保存"><svg width="15" height="15" viewBox="0 0 16 16"><path d="M0 0h16v16H0z" fill="#5550b0"/><path d="M4 0h8v7H4z" fill="#eee"/><path d="M3 10h10v6H3z" fill="#d4d0ee"/><path d="M5 11h2v5H5z" fill="#444"/></svg></button>
          <button class="flat" aria-label="保存到库"><svg width="16" height="16" viewBox="0 0 17 17"><path d="M0 2h12v15H0z" fill="#24352a"/><path d="M3 3h6v5H3zM3 11h7v6H3z" fill="#ddd"/><path d="M5 1h12v4h-2v9h-5V6H5z" fill="#289d37" stroke="#16581e" stroke-width=".6"/></svg></button>
          <span class="bar wide"></span>
          <button class="flat" aria-label="预览"><svg width="18" height="16" viewBox="0 0 18 16"><path d="M1 1h12v12H1z" fill="#e8cb8d" stroke="#5c7d9d"/><path d="M4 4h6v6H4z" fill="#fff" stroke="#5c7d9d"/><circle cx="13" cy="8" r="3" fill="#dae6ef" stroke="#555"/><path d="M11 10l-4 5" stroke="#555" stroke-width="2"/></svg></button>
          <button class="flat" aria-label="隐藏"><svg width="16" height="14" viewBox="0 0 16 14"><path d="M1 4h12v9H1z" fill="#eee" stroke="#999"/><path d="M1 6h12" stroke="#777" stroke-width="2"/><path d="M8 0l6 6M14 0L8 6" stroke="#dd5362" stroke-width="1.500"/></svg></button>
        </div>
        <div class="d-flex flex-grow-1 overflow-hidden">
          <div class="dlg-side">
            <div class="lbox">
              <div class="d-flex"><div class="clip params" id="pageTree"></div>
                <div class="vbar"><button class="flat" aria-label="上"><svg width="8" height="8"><use href="#cu"/></svg></button><div class="thumb vt1 mb-3"></div><button class="flat" aria-label="下"><svg width="8" height="8"><use href="#cd"/></svg></button></div></div>
              <div class="hbar d-flex"><button class="flat" aria-label="左"><svg width="8" height="8"><use href="#cl"/></svg></button><div class="thumb ht1 me-3"></div><button class="flat" aria-label="右"><svg width="8" height="8"><use href="#cr"/></svg></button></div>
            </div>
            <div class="mt-2 pb-1 pt-0">快速查看设置</div>
            <div class="lbox">
              <div class="d-flex"><div class="clip facts"><table>
                <tr><td>刀具</td><td>6 球刀/圆鼻.</td></tr><tr><td>刀具直径</td><td>6</td></tr><tr><td>圆角半径</td><td>3</td></tr><tr><td>进给速率</td><td>240</td></tr><tr><td>主轴转速</td><td>2000</td></tr><tr><td>冷却液</td><td>关</td></tr><tr><td>刀具长度</td><td>50</td></tr><tr><td>刀长补正</td><td>1</td></tr><tr><td>半径补正</td><td>1</td></tr><tr><td>绘图/刀具</td><td>俯视图</td></tr></table></div>
                <div class="vbar d-flex flex-column"><button class="flat" aria-label="上"><svg width="8" height="8"><use href="#cu"/></svg></button><div class="thumb vt2"></div><button class="flat mt-auto" aria-label="下"><svg width="8" height="8"><use href="#cd"/></svg></button></div></div>
              <div class="hbar d-flex"><button class="flat" aria-label="左"><svg width="8" height="8"><use href="#cl"/></svg></button><div class="thumb ht2"></div><button class="flat ms-2" aria-label="右"><svg width="8" height="8"><use href="#cr"/></svg></button></div>
            </div>
            <div class="legend-row"><svg class="i8 me-2 text-success"><use href="#ok"/></svg>=编辑</div>
            <div class="legend-row"><svg class="i8 me-2"><use href="#ban"/></svg>=无效</div>
          </div>
        </div>
        <div class="dlg-foot d-flex align-items-center justify-content-end">
          <input type="checkbox" class="tick" id="gen" checked><label for="gen" class="me-5">生成刀路</label>
          <span class="ps-2 pe-1"></span>
          <button class="flat act main" aria-label="确定"><svg width="14" height="14" viewBox="0 0 14 14"><path d="M1 8l2-2 3 3 5-8h3L7 14H5z" fill="#4fae35" stroke="#347b25" stroke-width=".6"/></svg></button>
          <button class="flat act" aria-label="取消"><svg width="14" height="14" viewBox="0 0 14 14"><path d="M1 3l3-2 3 3 4-3 2 2-3 4 3 4-3 2-3-3-3 3-3-3 3-3z" fill="#e5451f" stroke="#a92a12" stroke-width=".6"/></svg></button>
          <button class="flat act" aria-label="应用"><svg width="17" height="17" viewBox="0 0 17 17"><circle cx="8.500" cy="8.500" r="8" fill="#1e5fba" stroke="#174683"/><path d="M8.500 3v11M3 8.500h11" stroke="#fff" stroke-width="3"/></svg></button>
          <button class="flat act ms-0" aria-label="帮助"><svg width="12" height="15" viewBox="0 0 12 15"><path d="M2 5c0-5 8-4 8-1 0 3-4 3-4 6m0 2v2" fill="none" stroke="#555" stroke-width="3"/><path d="M2 5c0-5 8-4 8-1 0 3-4 3-4 6m0 2v2" fill="none" stroke="#e0e0e0"/></svg></button>
        </div>
        <svg class="pointer position-absolute" width="10" height="14" viewBox="0 0 10 14"><path d="M1 1v10l2-2 2 4 2-1-2-4h3z" fill="#fff" stroke="#333" stroke-width=".8"/></svg>
      </div>
    </div>
    <nav class="dock d-flex align-items-center"><a href="#" class="on">视图单编号1</a><a href="#">+</a><button class="flat ms-auto me-1" aria-label="左"><svg width="8" height="8"><use href="#al2"/></svg></button><button class="flat me-1" aria-label="右"><svg width="8" height="8"><use href="#ar2"/></svg></button></nav>
  </div>
</main>

<footer class="status d-flex align-items-center justify-content-end">
  <span class="sec">截面视图: 关闭</span><span class="sel">选择的图素: 0</span>
  <span class="axis">X:</span><span class="val me-1">-50.78343</span>
  <span class="axis">Y:</span><span class="val">57.78664</span>
  <span class="axis">Z:</span><span class="val">20.00000<svg width="4" height="4"><use href="#mark"/></svg></span>
  <span class="me-2">3D</span>
  <span class="plane">绘图平面: 俯视图<svg width="4" height="4"><use href="#mark"/></svg></span><span class="plane">刀具平面: 俯视图<svg width="4" height="4"><use href="#mark"/></svg></span><span class="plane last">WCS: 俯视图<svg width="4" height="4"><use href="#mark"/></svg></span>
  <span class="icons d-flex justify-content-between">
    <svg class="i12"><use href="#globe"/></svg><svg class="i12"><use href="#globe"/></svg><svg class="i12"><use href="#globe"/></svg>
    <svg class="i12" viewBox="0 0 12 12"><circle cx="6" cy="6" r="6" fill="#226bcb"/><circle cx="6" cy="6" r="5" fill="#dfe7ea"/></svg><svg class="i12" viewBox="0 0 12 12"><circle cx="6" cy="6" r="5" fill="#d5d9dc"/></svg><svg class="i12" viewBox="0 0 12 12"><circle cx="6" cy="6" r="5" fill="#cfd4d8"/><path d="M10 2L2 10a5 5 0 0 0 8-8" fill="#707986"/></svg>
  </span>
</footer>

<script>
const use = (id, cls) => `<svg class="${cls}"><use href="#${id}"/></svg>`;
// One tree row: guide cells, an icon cell, then the label.
const row = (cells, icon, text, cls = '') =>
  '<div class="trow">' + cells.map(c => c === 'minus' || c === 'plus' || c === 'first'
    ? `<span class="cell ${c === 'first' ? 'lone' : 'tee'}">${use(c === 'first' ? 'minus' : c, '')}</span>`
    : `<span class="cell ${c}"></span>`).join('') +
  `<span class="ticon ${icon === 'dash' ? 'dash' : ''}">${icon === 'dash' ? '' : use(icon, icon === 'ban' || icon === 'okgrey' ? 'i8' : 'i10')}</span>` +
  (text ? `<span class="ttext"><span class="${cls}">${text}</span></span>` : '') + '</div>';

let html = row(['first'], 'machine', '机床群组-2') + row(['', 'plus'], 'prop', '属性 - 4 - AXIS VMC') + row(['', 'minus'], 'tgroup', '刀具群组-2');
['820.4K', '1701.1K', '42.4K', '42.4K'].forEach((size, i) => {
  html += row(['', '', 'minus'], i === 2 ? 'folderon' : 'folder', `${i + 1} - 统一多轴 - [WCS: 俯视图] - [刀具面:`, i === 2 ? 'current' : '')
    + row(['', '', 'v', 'tee'], 'para', '参数')
    + row(['', '', 'v', 'tee'], 'mill', '#1 - M6.00 球形铣刀 - 6 球刀/圆鼻铣')
    + row(['', '', 'v', 'tee'], 'geom', '图形')
    + row(['', '', 'v', 'end'], 'wave2', `刀路 - ${size} - T03.NC - 程序编号 0`);
});
document.getElementById('opTree').innerHTML = html + row(['', '', 'end'], 'insert', '');

document.getElementById('pageTree').innerHTML =
  row(['top'], 'ban', '刀路类型') + row(['tee'], 'dash', '刀具') + row(['tee'], 'dash', '刀柄') + row(['tee'], 'dash', '') +
  row(['tee'], 'dash', '毛坯') + row(['minus'], 'dash', '切削方式') +
  row(['v', 'tee'], 'okgrey', '切削范围', 'chosen') + row(['v', 'tee'], 'dash', '加工几何图形 - 高') +
  row(['v', 'tee'], 'dash', '引导曲线 - 高级') + row(['v', 'end'], 'dash', '曲面质量高级选') +
  row(['tee'], 'dash', '刀轴控制') + row(['plus'], 'dash', '碰撞控制') + row(['plus'], 'dash', '连接方式') +
  row(['tee'], 'dash', '粗切') + row(['tee'], 'dash', '刀路调整') + row(['tee'], 'dash', '其他操作');

document.querySelectorAll('[data-tools]').forEach(bar => {
  bar.innerHTML = bar.dataset.tools.split(' ').map(t => t === '|' ? '<span class="bar"></span>'
    : t === 'G1' ? '<button class="flat">G1</button>'
    : `<button class="flat${t === 'ca' ? ' drop' : ''}" aria-label="${t}">${use(t, t === 'ca' ? 'i8' : 'i12')}</button>`).join('');
});

const marks = [
  '<path d="M6 1v10M1 6h10" stroke="#6d7f90" stroke-width="2"/>',
  '<path d="M2 2l8 8M2 2l4 1M10 10l-4-1M2 11L11 1" stroke="#7a868e" fill="none"/>',
  '<circle cx="6" cy="6" r="4" fill="none" stroke="#75848f" stroke-width="1.500"/>',
  '<path d="M2 2c7-1 1 9 8 9" fill="none" stroke="#717e88" stroke-width="1.500"/>',
  '<path d="M1 2h10v8H1zM6 2v8M1 6h10M3 4h6" fill="none" stroke="#7e95a9"/>',
  '<path d="M1 1v10M11 1v10M1 6h10" stroke="#6f7b84" stroke-width="1.500"/>',
  '<path d="M2 4l3-2 2 3 2-1 2 3-3 3-3-2z" fill="#a6946d"/>',
  '<path d="M2 4l4-2 4 2v5l-4 2-4-2z" fill="#8e979d"/>',
  '<path d="M1 3h6v8H1z" fill="#c9bc97"/><path d="M5 2h6v8H5z" fill="#9b9e96"/>',
  '<path d="M6 1h6v6H6z" fill="#8d8da8"/><path d="M1 6h5v5H1z" fill="#bdb77e"/>',
  '<path d="M6 1h6v5H6z" fill="#ebbba9"/><path d="M1 5h6v6H1z" fill="#e0505d"/>',
  '<path d="M2 2v9M5 1v9M8 2v3" stroke="#929ca2" stroke-dasharray="2 1"/>',
  '<path d="M2 2v7M5 1v7M9 2v9M5 7h6" stroke="#817e83" fill="none"/>',
  '<path d="M2 3l4-2 4 2v7l-4 2-4-2z" fill="#7fa4d1"/>',
  '<circle cx="6" cy="6" r="3" fill="none" stroke="#c5bd68" stroke-width="2"/><path d="M6 1v2m0 6v2M1 6h2m6 0h2" stroke="#c5bd68"/>',
  '<circle cx="6" cy="6" r="5" fill="none" stroke="#df9190" stroke-width="1.500"/><path d="M2 2l8 8" stroke="#df9190" stroke-width="1.500"/>'];
document.getElementById('rail').innerHTML = marks.map((m, i) =>
  `<button class="flat" aria-label="快速选择 ${i + 1}"><svg class="i12" viewBox="0 0 12 12">${m}</svg></button>`).join('');
</script>
<script src="https://cdn.jsdelivr.net/npm/bootstrap@5.3.0/dist/js/bootstrap.bundle.min.js"></script>
</body>
</html>
